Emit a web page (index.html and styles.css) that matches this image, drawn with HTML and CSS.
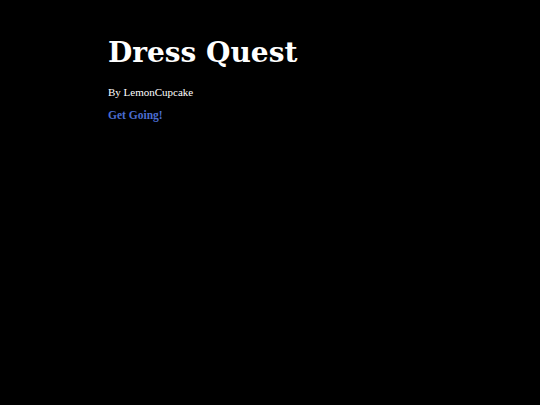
FILE: index.html
```html
<!DOCTYPE html>
<html>
<head>
<meta charset="utf-8">
<link rel="stylesheet" href="styles.css">
</head>
<body>
<main class="page">
  <h1 class="title">Dress Quest</h1>
  <p class="byline">By LemonCupcake</p>
  <p class="start"><a class="start-link" href="#">Get Going!</a></p>
</main>
</body>
</html>
```
FILE: styles.css
```css
html, body {
  margin: 0;
  padding: 0;
  background: #000;
  color: #fff;
  font-family: "Liberation Serif", serif;
}
.page {
  width: 324px;
  margin: 0 auto;
  padding-top: 37px;
}
.title {
  margin: 0;
  font-family: "DejaVu Serif", "Liberation Serif", serif;
  font-size: 28px;
  font-weight: bold;
  line-height: 32px;
}
.byline {
  margin: 16px 0 0;
  font-size: 11px;
  line-height: 14px;
}
.start {
  margin: 9px 0 0;
  font-size: 11.5px;
  line-height: 14px;
}
.start-link {
  color: #4a6cd0;
  font-weight: bold;
  text-decoration: none;
}
```
